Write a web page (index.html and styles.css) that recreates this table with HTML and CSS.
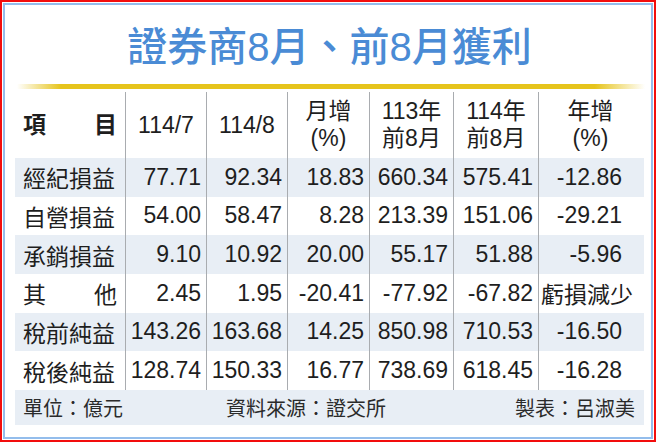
FILE: index.html
```html
<!DOCTYPE html>
<html lang="zh-Hant">
<head>
<meta charset="utf-8">
<title>證券商8月、前8月獲利</title>
<link rel="stylesheet" href="styles.css">
</head>
<body>
<div class="frame">
  <div class="panel">
    <h1 class="title">證券商8月、前8月獲利</h1>
    <div class="rule"></div>
    <div class="table">
      <div class="row head">
        <div class="cell label"><span>項</span><span>目</span></div>
        <div class="cell">114/7</div>
        <div class="cell">114/8</div>
        <div class="cell">月增<br>(%)</div>
        <div class="cell">113年<br>前8月</div>
        <div class="cell">114年<br>前8月</div>
        <div class="cell">年增<br>(%)</div>
      </div>
      <div class="row shade">
        <div class="cell label"><span>經紀損益</span></div>
        <div class="cell num">77.71</div>
        <div class="cell num">92.34</div>
        <div class="cell num">18.83</div>
        <div class="cell num">660.34</div>
        <div class="cell num">575.41</div>
        <div class="cell num last">-12.86</div>
      </div>
      <div class="row">
        <div class="cell label"><span>自營損益</span></div>
        <div class="cell num">54.00</div>
        <div class="cell num">58.47</div>
        <div class="cell num">8.28</div>
        <div class="cell num">213.39</div>
        <div class="cell num">151.06</div>
        <div class="cell num last">-29.21</div>
      </div>
      <div class="row shade">
        <div class="cell label"><span>承銷損益</span></div>
        <div class="cell num">9.10</div>
        <div class="cell num">10.92</div>
        <div class="cell num">20.00</div>
        <div class="cell num">55.17</div>
        <div class="cell num">51.88</div>
        <div class="cell num last">-5.96</div>
      </div>
      <div class="row">
        <div class="cell label"><span>其</span><span>他</span></div>
        <div class="cell num">2.45</div>
        <div class="cell num">1.95</div>
        <div class="cell num">-20.41</div>
        <div class="cell num">-77.92</div>
        <div class="cell num">-67.82</div>
        <div class="cell num note">虧損減少</div>
      </div>
      <div class="row shade">
        <div class="cell label"><span>稅前純益</span></div>
        <div class="cell num">143.26</div>
        <div class="cell num">163.68</div>
        <div class="cell num">14.25</div>
        <div class="cell num">850.98</div>
        <div class="cell num">710.53</div>
        <div class="cell num last">-16.50</div>
      </div>
      <div class="row">
        <div class="cell label"><span>稅後純益</span></div>
        <div class="cell num">128.74</div>
        <div class="cell num">150.33</div>
        <div class="cell num">16.77</div>
        <div class="cell num">738.69</div>
        <div class="cell num">618.45</div>
        <div class="cell num last">-16.28</div>
      </div>
    </div>
    <div class="foot">
      <span class="unit">單位：億元</span>
      <span class="source">資料來源：證交所</span>
      <span class="maker">製表：呂淑美</span>
    </div>
  </div>
</div>
</body>
</html>
```
FILE: styles.css
```css
* { box-sizing: border-box; }
html, body { margin: 0; padding: 0; background: #fff; }
body {
  font-family: "Liberation Sans", "Noto Sans CJK TC", sans-serif;
  color: #1e1e1e;
}
.frame {
  width: 656px;
  height: 442px;
  border: 2px solid #f20d0d;
  padding: 1px;
}
.panel {
  height: 100%;
  border: 2px solid #93bdec;
  padding: 0 7px 0 10px;
}
.title {
  margin: 18px 0 13px;
  height: 48px;
  line-height: 48px;
  font-size: 40px;
  font-weight: 500;
  text-align: center;
  color: #4a8bd5;
  letter-spacing: 0;
}
.rule {
  height: 5px;
  margin: 0 -1px 0 2px;
  background: linear-gradient(to right, rgba(232,198,25,0) 0%, #e6c41c 7%, #e6c41c 92%, rgba(232,198,25,0) 100%);
}
.table { margin-top: 3px; }
.row {
  display: grid;
  grid-template-columns: 110px 81px 81px 82px 84px 85px 104px;
  height: 38.67px;
  font-size: 23px;
}
.row.head { height: 66px; }
.row.shade { background: #e8eef5; }
.cell {
  display: flex;
  align-items: center;
  justify-content: flex-end;
  white-space: nowrap;
  border-left: 1px solid #a9acb0;
}
.cell.label {
  border-left: 0;
  justify-content: space-between;
  padding: 0 8px;
}
.head .cell {
  justify-content: center;
  text-align: center;
  line-height: 27px;
}
.head .cell.label {
  justify-content: space-between;
  font-weight: 700;
}
.cell.num { padding-right: 5px; }
.cell.last { padding-right: 20px; }
.cell.note { padding-right: 9px; }
.foot {
  display: flex;
  align-items: center;
  height: 35px;
  padding: 0 9px 0 8px;
  background: #e8eef5;
  font-size: 20px;
  color: #2a2a2a;
}
.source { margin-left: 103px; }
.maker { margin-left: auto; }
```
